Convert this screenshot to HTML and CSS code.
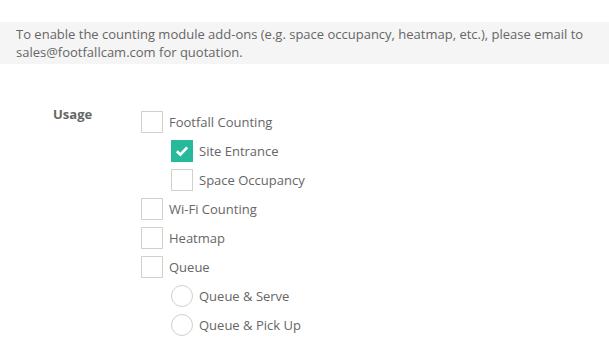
FILE: index.html
```html
<!DOCTYPE html>
<html lang="en">

<head>
  <meta charset="UTF-8">
  <meta name="viewport" content="width=device-width, initial-scale=1.0">
  <title>Usage</title>
  <link rel="stylesheet" href="styles.css">
</head>

<body>
  <div class="notice">
    To enable the counting module add-ons (e.g. space occupancy, heatmap, etc.), please email to
    sales@footfallcam.com for quotation.
  </div>

  <div class="form-row">
    <label class="form-label">Usage</label>
    <div class="options">
      <div class="option">
        <span class="check"></span>
        <span>Footfall Counting</span>
      </div>
      <div class="option sub">
        <span class="check checked">
          <svg width="14" height="12" viewBox="0 0 14 12">
            <path d="M1.8 6.2 L5.4 9.6 L12.2 2.4" fill="none" stroke="#fff" stroke-width="2.8" />
          </svg>
        </span>
        <span>Site Entrance</span>
      </div>
      <div class="option sub">
        <span class="check"></span>
        <span>Space Occupancy</span>
      </div>
      <div class="option">
        <span class="check"></span>
        <span>Wi-Fi Counting</span>
      </div>
      <div class="option">
        <span class="check"></span>
        <span>Heatmap</span>
      </div>
      <div class="option">
        <span class="check"></span>
        <span>Queue</span>
      </div>
      <div class="option sub">
        <span class="check radio"></span>
        <span>Queue &amp; Serve</span>
      </div>
      <div class="option sub">
        <span class="check radio"></span>
        <span>Queue &amp; Pick Up</span>
      </div>
    </div>
  </div>
</body>

</html>
```

FILE: styles.css
```css
body {
  font-family: 'Open Sans', sans-serif;
  font-size: 13px;
  color: #666;
  background-color: #fff;
  margin: 0;
  padding: 0;
}

.notice {
  margin-top: 22px;
  background-color: #f5f5f5;
  padding: 3px 16px 3px 16px;
  line-height: 18px;
  height: 36px;
}

.form-row {
  display: flex;
  padding-top: 47px;
}

.form-label {
  width: 88px;
  padding-left: 53px;
  margin-top: -6px;
  font-weight: bold;
  line-height: 18px;
}

.options {
  display: flex;
  flex-direction: column;
  gap: 7px;
}

.option {
  display: flex;
  align-items: center;
  gap: 6px;
  height: 22px;
}

.option.sub {
  padding-left: 30px;
}

.check {
  width: 20px;
  height: 20px;
  border: 1px solid #d3cfc9;
  background-color: #fff;
  display: flex;
  align-items: center;
  justify-content: center;
}

.check.checked {
  background-color: #26b99a;
  border-color: #26b99a;
}

.check.radio {
  border-radius: 50%;
}
```
